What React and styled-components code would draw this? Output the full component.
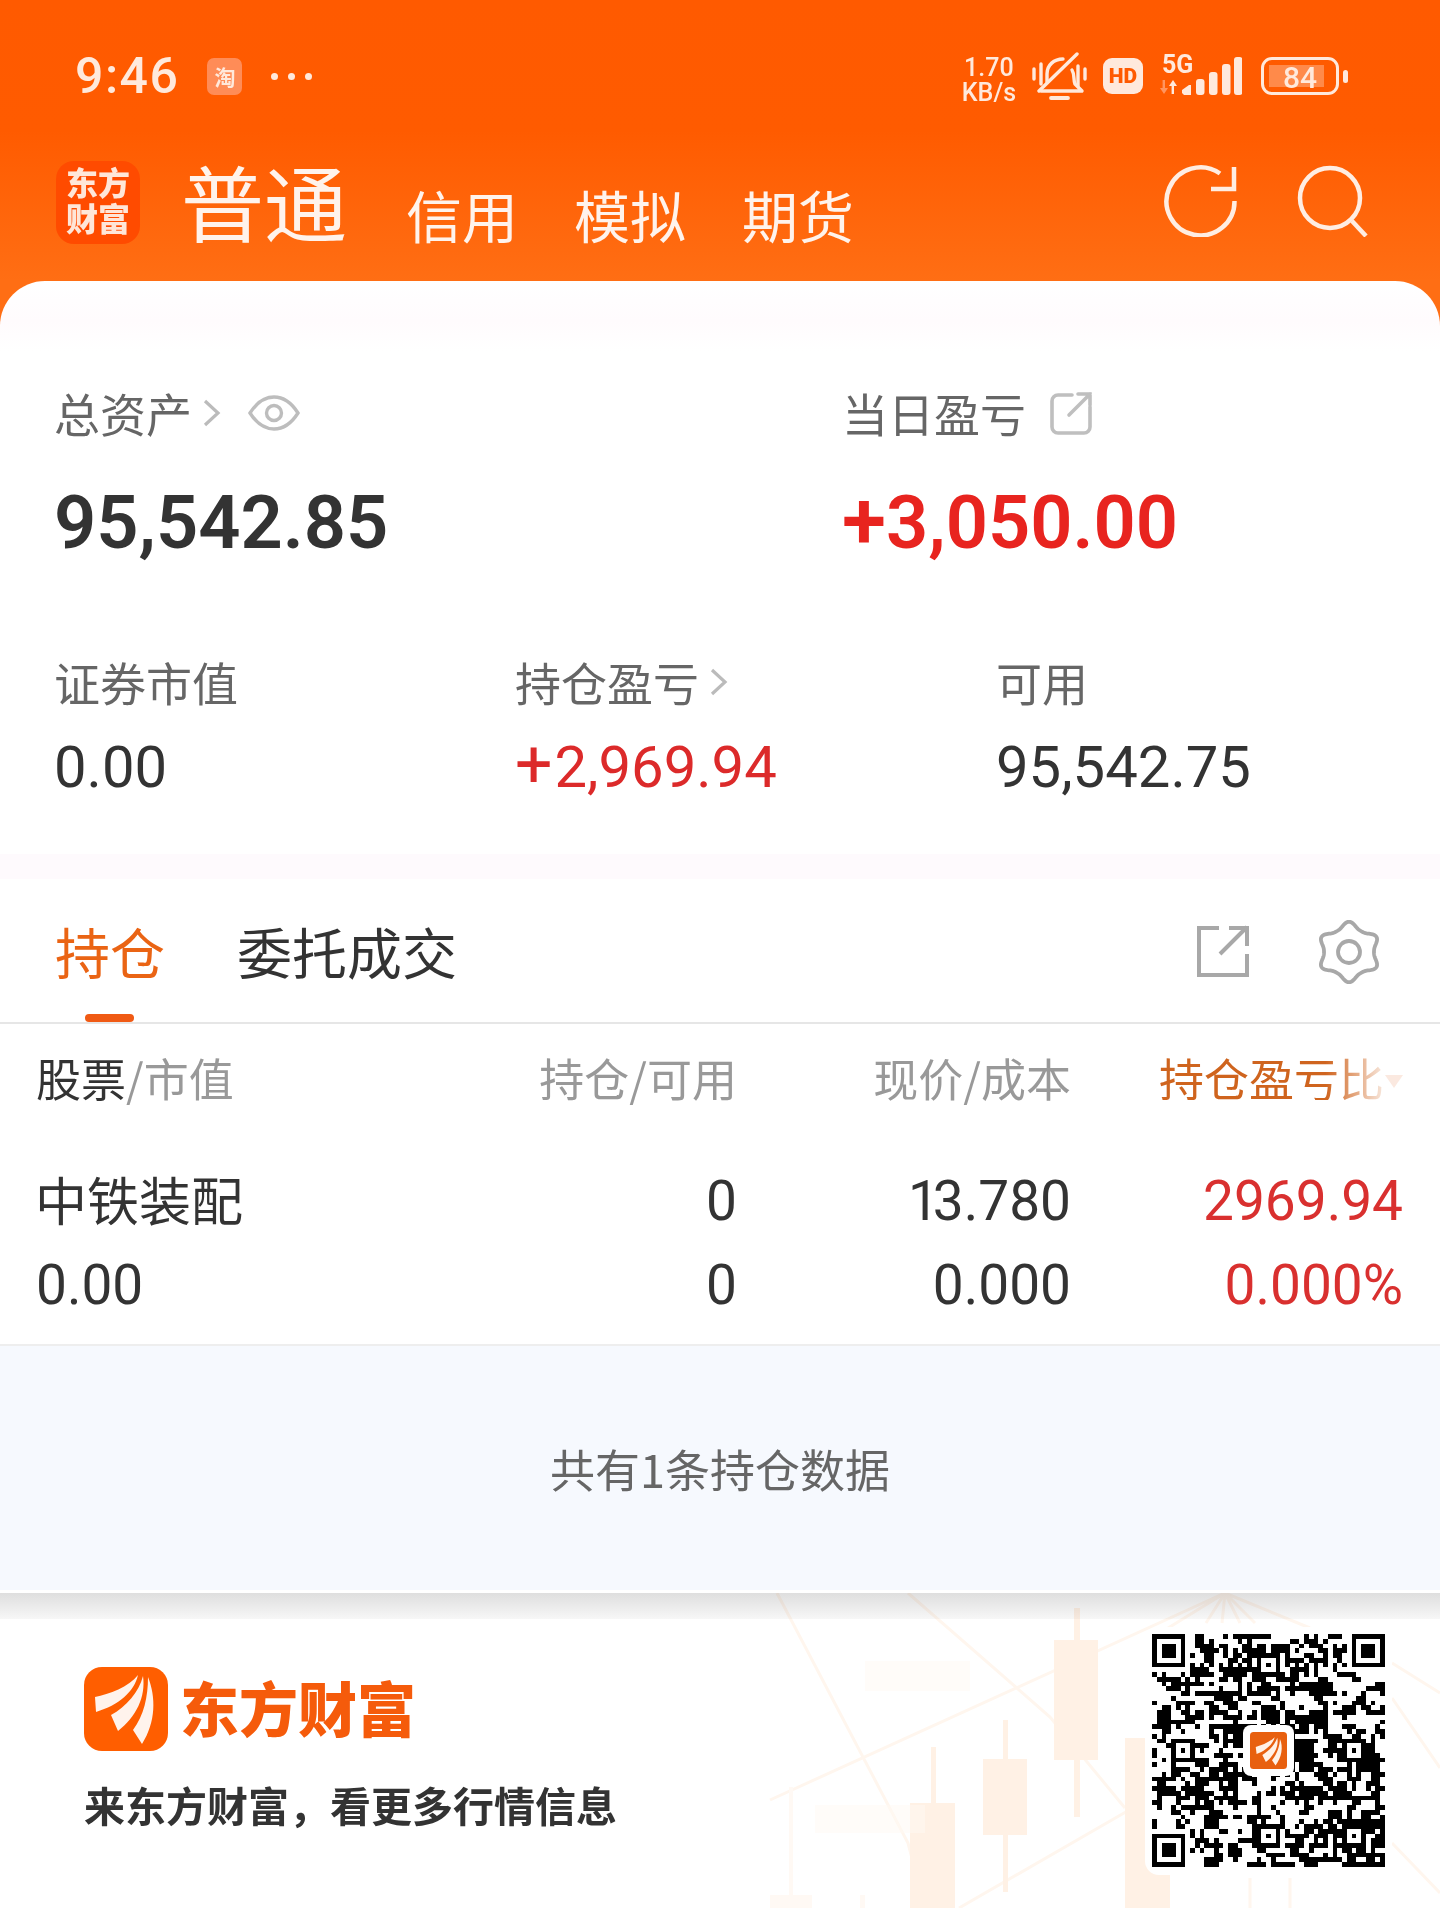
import React from 'react';
import styled, { createGlobalStyle } from 'styled-components';

const GlobalStyle = createGlobalStyle`
  html, body {
    margin: 0;
    padding: 0;
    background: #fff;
  }
  * {
    box-sizing: border-box;
  }
`;

const cjk = `"Noto Sans CJK SC", "Noto Sans", sans-serif`;
const digits = `Roboto, "Noto Sans CJK SC", sans-serif`;

// fixed-seed generator so the code pattern stays the same on each render
const makeRandom = (seed) => () => {
  seed = (seed + 0x6d2b79f5) | 0;
  let t = Math.imul(seed ^ (seed >>> 15), 1 | seed);
  t = (t + Math.imul(t ^ (t >>> 7), 61 | t)) ^ t;
  return ((t ^ (t >>> 14)) >>> 0) / 4294967296;
};

const buildQrPath = () => {
  const size = 49;
  const rand = makeRandom(20240);
  const grid = Array.from({ length: size }, () => Array(size).fill(null));

  const stamp = (ox, oy, n) => {
    for (let y = -1; y <= n; y++) {
      for (let x = -1; x <= n; x++) {
        const gx = ox + x;
        const gy = oy + y;
        if (gx < 0 || gy < 0 || gx >= size || gy >= size) continue;
        const inside = x >= 0 && y >= 0 && x < n && y < n;
        const ring = x === 0 || y === 0 || x === n - 1 || y === n - 1;
        const core = x >= 2 && y >= 2 && x < n - 2 && y < n - 2;
        grid[gy][gx] = inside && (ring || core);
      }
    }
  };
  stamp(0, 0, 7);
  stamp(size - 7, 0, 7);
  stamp(0, size - 7, 7);

  // alignment squares for a 49 module code
  [[24, 6], [6, 24], [42, 24], [24, 42], [42, 42]].forEach(([cx, cy]) => {
    for (let y = -2; y <= 2; y++) {
      for (let x = -2; x <= 2; x++) {
        grid[cy + y][cx + x] = Math.max(Math.abs(x), Math.abs(y)) !== 1;
      }
    }
  });

  for (let i = 8; i < size - 8; i++) {
    if (grid[6][i] === null) grid[6][i] = i % 2 === 0;
    if (grid[i][6] === null) grid[i][6] = i % 2 === 0;
  }

  for (let y = 0; y < size; y++) {
    for (let x = 0; x < size; x++) {
      if (grid[y][x] !== null) continue;
      const left = x > 0 && grid[y][x - 1];
      const up = y > 0 && grid[y - 1][x];
      const chance = 0.36 + (left ? 0.17 : 0) + (up ? 0.14 : 0);
      grid[y][x] = rand() < chance;
    }
  }

  let d = '';
  for (let y = 0; y < size; y++) {
    for (let x = 0; x < size; x++) {
      if (!grid[y][x]) continue;
      let end = x;
      while (end + 1 < size && grid[y][end + 1]) end++;
      d += `M${x} ${y}H${end + 1}V${y + 1}H${x}Z`;
      x = end;
    }
  }
  return d;
};

const qrPath = buildQrPath();

const buildGearPath = () => {
  const points = [];
  for (let i = 0; i < 180; i++) {
    const a = (i / 180) * Math.PI * 2;
    const r = 26.5 + 3.2 * Math.cos(6 * a) + 0.5 * Math.cos(12 * a);
    const x = 32 + r * 1.05 * Math.sin(a);
    const y = 31 - r * Math.cos(a);
    points.push(`${x.toFixed(2)} ${y.toFixed(2)}`);
  }
  return `M${points.join('L')}Z`;
};

const gearPath = buildGearPath();

const stats = [
  { label: '证券市值', value: '0.00' },
  { label: '持仓盈亏', value: '+2,969.94', up: true, more: true },
  { label: '可用', value: '95,542.75' },
];

const App = () => {
  return (
    <>
      <GlobalStyle />
      <Page>
        <Header>
          <StatusBar>
            <Time>9:46</Time>
            <AppBadge>淘</AppBadge>
            <MoreDots>
              <i />
              <i />
              <i />
            </MoreDots>
            <StatusRight>
              <Speed>
                <span>1.70</span>
                <span>KB/s</span>
              </Speed>
              <MutedBell />
              <HdBadge>HD</HdBadge>
              <Network>
                <NetLabel>5G</NetLabel>
                <SignalBars />
              </Network>
              <Battery>
                <BatteryBody>
                  <BatteryLevel>84</BatteryLevel>
                </BatteryBody>
                <BatteryTip />
              </Battery>
            </StatusRight>
          </StatusBar>
          <AccountBar>
            <LogoTile>
              <span>东方</span>
              <span>财富</span>
            </LogoTile>
            <Modes>
              <Mode $active>普通</Mode>
              <Mode>信用</Mode>
              <Mode>模拟</Mode>
              <Mode>期货</Mode>
            </Modes>
            <HeaderActions>
              <RefreshIcon />
              <SearchIcon />
            </HeaderActions>
          </AccountBar>
        </Header>

        <Sheet>
          <Summary>
            <div>
              <Label>
                总资产
                <Chevron />
                <EyeIcon />
              </Label>
              <BigValue>95,542.85</BigValue>
            </div>
            <div>
              <Label>
                当日盈亏
                <ExportSmall />
              </Label>
              <BigValue $up>+3,050.00</BigValue>
            </div>
          </Summary>

          <Stats>
            {stats.map((item) => (
              <div key={item.label}>
                <Label>
                  {item.label}
                  {item.more && <Chevron />}
                </Label>
                <StatValue $up={item.up}>{item.value}</StatValue>
              </div>
            ))}
          </Stats>

          <SectionBand />

          <TabBar>
            <Tab $active>持仓</Tab>
            <Tab>委托成交</Tab>
            <TabActions>
              <ExportLarge />
              <GearIcon />
            </TabActions>
          </TabBar>

          <TableHead>
            <HeadCell $left>
              <em>股票</em>/市值
            </HeadCell>
            <HeadCell>持仓/可用</HeadCell>
            <HeadCell>现价/成本</HeadCell>
            <SortCell>
              <SortText>持仓盈亏比</SortText>
              <SortArrow />
            </SortCell>
          </TableHead>

          <HoldingRow>
            <StockName>中铁装配</StockName>
            <Num>0</Num>
            <Num $narrowOne>13.780</Num>
            <Num $up>2969.94</Num>
            <Num $left>0.00</Num>
            <Num>0</Num>
            <Num>0.000</Num>
            <Num $up>0.000%</Num>
          </HoldingRow>

          <EmptyNote>共有1条持仓数据</EmptyNote>
        </Sheet>

        <Promo>
          <PromoShade />
          <Candles />
          <Brand>
            <BrandRow>
              <BrandMark />
              <BrandName>东方财富</BrandName>
            </BrandRow>
            <Tagline>来东方财富，看更多行情信息</Tagline>
          </Brand>
          <QrCard>
            <QrCode />
          </QrCard>
        </Promo>
      </Page>
    </>
  );
};

export default App;

/* drawings */

const MutedBell = () => (
  <svg width="55" height="49" viewBox="0 0 55 49" fill="none" stroke="#FFE9DC" strokeWidth="3.4" strokeLinecap="round" strokeLinejoin="round">
    <path d="M2 17v10M9 12v20M46 14v20M53 17v10" />
    <path d="M15 30V22C15 13 22 7 31 7" />
    <path d="M40 18c3 5 1 9 3 14l7 7H9" />
    <path d="M7 39L45 2" />
    <path d="M19 46h17" strokeWidth="3.8" />
  </svg>
);

const SignalBars = () => (
  <svg width="83" height="40" viewBox="0 0 83 40" fill="#FFE9DC">
    <path d="M23 37v-3l7-5h2v10h-7z" />
    <rect x="37" y="23" width="8.500" height="16" rx="3" />
    <rect x="50" y="16" width="8.500" height="23" rx="3" />
    <rect x="63" y="8" width="8.500" height="31" rx="3" />
    <rect x="75" y="1" width="8.500" height="38" rx="3" />
    <path d="M14 24l4 6h-3v8h-2.400v-8H10z" />
    <path d="M5 38l4-6H6v-8H3.600v8H1z" fill="#FF9560" />
  </svg>
);

const RefreshIcon = () => (
  <svg width="73" height="73" viewBox="0 0 73 73" fill="none" stroke="#FFEDE2" strokeWidth="4.500">
    <path d="M56 9.500A34 34 0 1 0 70.500 37" />
    <path d="M70 3v22H47" />
  </svg>
);

const SearchIcon = () => (
  <svg width="73" height="73" viewBox="0 0 73 73" fill="none" stroke="#FFEDE2" strokeWidth="4.500">
    <circle cx="34" cy="34" r="30" />
    <path d="M56 57l14 15" />
  </svg>
);

const ChevronSvg = ({ className }) => (
  <svg className={className} width="18" height="28" viewBox="0 0 18 28" fill="none" stroke="#BBBBBB" strokeWidth="3.200">
    <path d="M2 2l13 12L2 26" />
  </svg>
);

const EyeSvg = ({ className }) => (
  <svg className={className} width="52" height="36" viewBox="0 0 52 36" fill="none" stroke="#BDBDBD" strokeWidth="3.400">
    <path d="M2 18C9 7 17 2 26 2s17 5 24 16c-7 11-15 16-24 16S9 29 2 18z" />
    <circle cx="26" cy="18" r="7.500" />
  </svg>
);

const ExportSmallSvg = ({ className }) => (
  <svg className={className} width="44" height="44" viewBox="0 0 44 44" fill="none" stroke="#BFBFBF" strokeWidth="3.600" strokeLinecap="round">
    <path d="M23 4H9a6 6 0 0 0-6 6v26a6 6 0 0 0 6 6h26a6 6 0 0 0 6-6V16" />
    <path d="M20 24L41 3M29 3h12v11" />
  </svg>
);

const ExportLarge = () => (
  <svg width="54" height="53" viewBox="0 0 54 53" fill="none" stroke="#A8A8A8" strokeWidth="4">
    <path d="M23 3H3v47h48V29" />
    <path d="M24 29L51 2M33 3h18v18" />
  </svg>
);

const GearIcon = () => (
  <svg width="64" height="62" viewBox="0 0 64 62" fill="none" stroke="#A8A8A8" strokeWidth="3.800" overflow="visible">
    <path d={gearPath} />
    <circle cx="32" cy="31" r="11" />
  </svg>
);

const BrandMark = () => (
  <svg width="84" height="84" viewBox="0 0 84 84">
    <rect width="84" height="84" rx="18" fill="#FF5E00" />
    <g fill="#FFF3EC">
      <path d="M11 30C25 27 45 20 54 8 50 25 35 38 12 45z" />
      <path d="M27 48C42 40 55 25 59 9 62 30 52 50 34 64z" />
      <path d="M49 63C60 48 64 30 64 10 72 30 72 55 58 77z" />
    </g>
  </svg>
);

const Candles = () => (
  <Watermark viewBox="720 0 720 315" width="720" height="315">
    <g stroke="#FFF6EE" strokeWidth="3" fill="none">
      <path d="M777 0L908 250L925 315" />
      <path d="M908 0L1050 124L1125 215" />
      <path d="M770 207L1225 0" />
      <path d="M959 315L1124 220L1175 190" />
      <path d="M1225 0L1255 30M1225 0L1240 30M1225 0L1222 30M1225 0L1206 30M1225 0L1310 35M1225 0L1160 40" />
      <path d="M1392 70L1440 100M1392 105L1440 175M1392 250L1440 300" />
      <path d="M1250 285V315M1290 285V315" />
    </g>
    <g fill="#FFF1E5">
      <rect x="1074" y="15" width="6" height="209" />
      <rect x="1054" y="47" width="44" height="120" />
      <rect x="1003" y="127" width="5" height="172" />
      <rect x="983" y="166" width="44" height="76" />
      <rect x="931" y="154" width="5" height="70" />
      <rect x="910" y="210" width="45" height="105" />
      <rect x="1125" y="145" width="45" height="170" />
    </g>
    <g fill="#FFF9F4">
      <rect x="789" y="194" width="4" height="120" />
      <rect x="770" y="302" width="42" height="13" />
      <rect x="860" y="302" width="5" height="13" />
      <rect x="865" y="68" width="105" height="30" opacity="0.5" />
      <rect x="815" y="212" width="110" height="28" opacity="0.5" />
    </g>
  </Watermark>
);

const QrCode = () => (
  <QrFrame>
    <svg width="233" height="233" viewBox="0 0 49 49" shapeRendering="crispEdges">
      <path d={qrPath} fill="#000" />
    </svg>
    <QrLogo>
      <svg width="37" height="37" viewBox="0 0 84 84">
        <rect width="84" height="84" rx="8" fill="#E8600F" />
        <g fill="#FFF1E6">
          <path d="M13 34C28 30 46 22 56 12 52 28 36 42 15 50z" />
          <path d="M28 52C42 44 56 30 62 13 66 34 54 54 36 68z" />
          <path d="M50 64C62 50 67 32 68 16 76 34 72 58 58 76z" />
        </g>
      </svg>
    </QrLogo>
  </QrFrame>
);

/* layout */

const Page = styled.div`
  width: 1440px;
  height: 1908px;
  overflow: hidden;
  background: #fff;
  font-family: ${cjk};
`;

const Header = styled.header`
  height: 326px;
  margin-bottom: -45px;
  background: linear-gradient(180deg, #ff5a00 0, #ff5b00 130px, #ff6e14 281px);
`;

const StatusBar = styled.div`
  display: flex;
  align-items: center;
  height: 152px;
  padding: 0 92px 0 75px;
  color: #ffe9dc;
`;

const Time = styled.span`
  font-family: ${digits};
  font-size: 50px;
  font-weight: 500;
  line-height: 1;
  letter-spacing: 1.5px;
`;

const AppBadge = styled.span`
  display: flex;
  align-items: center;
  justify-content: center;
  width: 35px;
  height: 37px;
  margin-left: 28px;
  border-radius: 7px;
  background: #ff8c57;
  font-size: 21px;
  font-weight: 700;
`;

const MoreDots = styled.span`
  display: flex;
  gap: 10px;
  margin-left: 29px;

  i {
    width: 7px;
    height: 7px;
    border-radius: 50%;
    background: #ffe9dc;
  }
`;

const StatusRight = styled.div`
  display: flex;
  align-items: center;
  gap: 16px;
  margin-left: auto;
`;

const Speed = styled.div`
  display: flex;
  flex-direction: column;
  align-items: center;
  margin-top: 8px;
  font-family: ${digits};
  font-size: 25px;
  font-weight: 500;
  line-height: 25px;
`;

const HdBadge = styled.span`
  width: 40px;
  height: 36px;
  border-radius: 9px;
  background: #ffe9dc;
  color: #ff5a00;
  font-family: ${digits};
  font-size: 21px;
  font-weight: 900;
  line-height: 36px;
  text-align: center;
`;

const Network = styled.div`
  position: relative;
  width: 83px;
  height: 40px;
`;

const NetLabel = styled.span`
  position: absolute;
  top: -3px;
  left: 3px;
  font-family: ${digits};
  font-size: 25px;
  font-weight: 700;
  line-height: 24px;
`;

const Battery = styled.div`
  display: flex;
  align-items: center;
  gap: 4px;
  margin-left: 3px;
`;

const BatteryBody = styled.div`
  display: flex;
  width: 78px;
  height: 38px;
  padding: 5px 12px 5px 5px;
  border: 3.5px solid #ffe9dc;
  border-radius: 11px;
`;

const BatteryLevel = styled.span`
  flex: 1;
  padding-left: 7px;
  background: #ff8a4a;
  font-family: ${digits};
  font-size: 30px;
  font-weight: 500;
  line-height: 25px;
  text-align: center;
`;

const BatteryTip = styled.span`
  width: 5px;
  height: 13px;
  border-radius: 3px;
  background: #ffe9dc;
`;

const AccountBar = styled.div`
  display: flex;
  align-items: flex-start;
  height: 129px;
  padding: 9px 71px 0 56px;
`;

const LogoTile = styled.div`
  display: flex;
  flex-direction: column;
  align-items: center;
  justify-content: center;
  width: 84px;
  height: 83px;
  padding-bottom: 7px;
  border-radius: 18px;
  background: #ff4b00;
  color: #ffe6d8;
  font-size: 32px;
  font-weight: 900;
  line-height: 36px;
`;

const Modes = styled.nav`
  display: flex;
  align-items: flex-end;
  gap: 56px;
  height: 81px;
  margin-left: 41px;
`;

const Mode = styled.span`
  margin-right: ${(p) => (p.$active ? '3px' : '0')};
  color: #fff3ec;
  font-size: ${(p) => (p.$active ? '83px' : '56px')};
  line-height: 1;
`;

const HeaderActions = styled.div`
  display: flex;
  gap: 59px;
  margin-left: auto;
  padding-top: 3px;
`;

const Sheet = styled.main`
  position: relative;
  height: 1312px;
  padding-top: 109px;
  border-radius: 45px 45px 0 0;
  background: linear-gradient(180deg, #fff 0, #fffbfd 40px, #fff 70px);
`;

const Summary = styled.section`
  display: grid;
  grid-template-columns: 788px 1fr;
  padding-left: 54px;
`;

const Label = styled.div`
  display: flex;
  align-items: center;
  height: 45px;
  color: #666;
  font-size: 46px;
  line-height: 45px;
`;

const Chevron = styled(ChevronSvg)`
  margin-left: 11px;
`;

const EyeIcon = styled(EyeSvg)`
  margin-left: 27px;
`;

const ExportSmall = styled(ExportSmallSvg)`
  margin-left: 23px;
`;

const BigValue = styled.div`
  margin-top: 51px;
  color: ${(p) => (p.$up ? '#e8241f' : '#333')};
  font-family: ${digits};
  font-size: 74px;
  font-weight: 600;
  line-height: 74px;

  &::first-letter {
    font-size: ${(p) => (p.$up ? '80px' : '74px')};
    line-height: 0;
  }
`;

const Stats = styled.section`
  display: grid;
  grid-template-columns: 461px 481px 1fr;
  margin-top: 99px;
  padding-left: 54px;
`;

const StatValue = styled.div`
  margin-top: 34px;
  color: ${(p) => (p.$up ? '#dc2a2a' : '#333')};
  font-family: ${digits};
  font-size: 58px;
  line-height: 58px;

  &::first-letter {
    font-size: ${(p) => (p.$up ? '66px' : '58px')};
    letter-spacing: ${(p) => (p.$up ? '2px' : '0')};
    line-height: 0;
  }
`;

const SectionBand = styled.div`
  height: 25px;
  margin-top: 58px;
  background: #fefafd;
`;

const TabBar = styled.div`
  display: flex;
  align-items: center;
  gap: 72px;
  height: 145px;
  padding: 0 59px 0 55px;
  border-bottom: 2px solid #e6e6e6;
`;

const Tab = styled.span`
  position: relative;
  color: ${(p) => (p.$active ? '#ea6414' : '#333')};
  font-size: 55px;
  line-height: 55px;

  &::after {
    content: '';
    display: ${(p) => (p.$active ? 'block' : 'none')};
    position: absolute;
    left: 30px;
    bottom: -44px;
    width: 49px;
    height: 8px;
    border-radius: 4px;
    background: #f05a14;
  }
`;

const TabActions = styled.div`
  display: flex;
  align-items: center;
  gap: 67px;
  margin-left: auto;
  padding-top: 2px;
`;

const tableColumns = `
  display: grid;
  grid-template-columns: 367px 334px 334px 332px;
  padding: 0 37px 0 36px;
`;

const TableHead = styled.div`
  ${tableColumns}
  padding-top: 31px;
`;

const HeadCell = styled.div`
  color: #999;
  font-size: 45px;
  line-height: 45px;
  text-align: ${(p) => (p.$left ? 'left' : 'right')};

  em {
    color: #333;
    font-style: normal;
  }
`;

const SortCell = styled.div`
  display: flex;
  align-items: center;
  justify-content: flex-end;
`;

const SortText = styled.span`
  color: #cf641e;
  font-size: 45px;
  line-height: 45px;
  mask-image: linear-gradient(90deg, #000 74%, rgba(0, 0, 0, 0.15) 100%);
`;

const SortArrow = styled.i`
  width: 0;
  height: 0;
  margin: 8px 0 0 1px;
  border-top: 13px solid #fbe9e0;
  border-left: 9px solid transparent;
  border-right: 9px solid transparent;
`;

const HoldingRow = styled.div`
  ${tableColumns}
  align-items: center;
  align-content: start;
  row-gap: 29px;
  height: 246px;
  padding-top: 74px;
  border-bottom: 2px solid #eeeeee;
`;

const StockName = styled.div`
  margin-left: -1px;
  padding-bottom: 6px;
  color: #333;
  font-size: 52px;
  line-height: 44px;
`;

const Num = styled.div`
  color: ${(p) => (p.$up ? '#d9302f' : '#333')};
  font-family: ${digits};
  font-size: 55px;
  line-height: 55px;
  text-align: ${(p) => (p.$left ? 'left' : 'right')};

  &::first-letter {
    letter-spacing: ${(p) => (p.$narrowOne ? '-6px' : '0')};
  }
`;

const EmptyNote = styled.div`
  display: flex;
  align-items: center;
  justify-content: center;
  height: 244px;
  background: #f6f9fe;
  color: #666;
  font-size: 45px;
`;

const Promo = styled.footer`
  position: relative;
  display: flex;
  align-items: flex-start;
  justify-content: space-between;
  height: 315px;
  padding: 34px 48px 0 84px;
  background: #fff;
`;

const PromoShade = styled.div`
  position: absolute;
  top: 0;
  left: 0;
  right: 0;
  height: 26px;
  background: linear-gradient(180deg, #dedede 0, #f7f7f7 100%);
`;

const Watermark = styled.svg`
  position: absolute;
  top: 0;
  right: 0;
  mix-blend-mode: multiply;
`;

const Brand = styled.div`
  position: relative;
  margin-top: 40px;
`;

const BrandRow = styled.div`
  display: flex;
  align-items: center;
  gap: 12px;
`;

const BrandName = styled.span`
  margin-top: -5px;
  color: #f55b0b;
  font-size: 59px;
  font-weight: 900;
  line-height: 59px;
`;

const Tagline = styled.p`
  margin: 29px 0 0;
  color: #333;
  font-size: 41px;
  font-weight: 700;
  line-height: 48px;
`;

const QrCard = styled.div`
  position: relative;
  width: 247px;
  height: 248px;
  padding: 7px;
  border-radius: 14px;
  background: #fff;
`;

const QrFrame = styled.div`
  position: relative;
  width: 233px;
  height: 233px;

  svg {
    display: block;
  }
`;

const QrLogo = styled.div`
  position: absolute;
  top: 91px;
  left: 91px;
  padding: 7px;
  border-radius: 8px;
  background: #fff;
`;
